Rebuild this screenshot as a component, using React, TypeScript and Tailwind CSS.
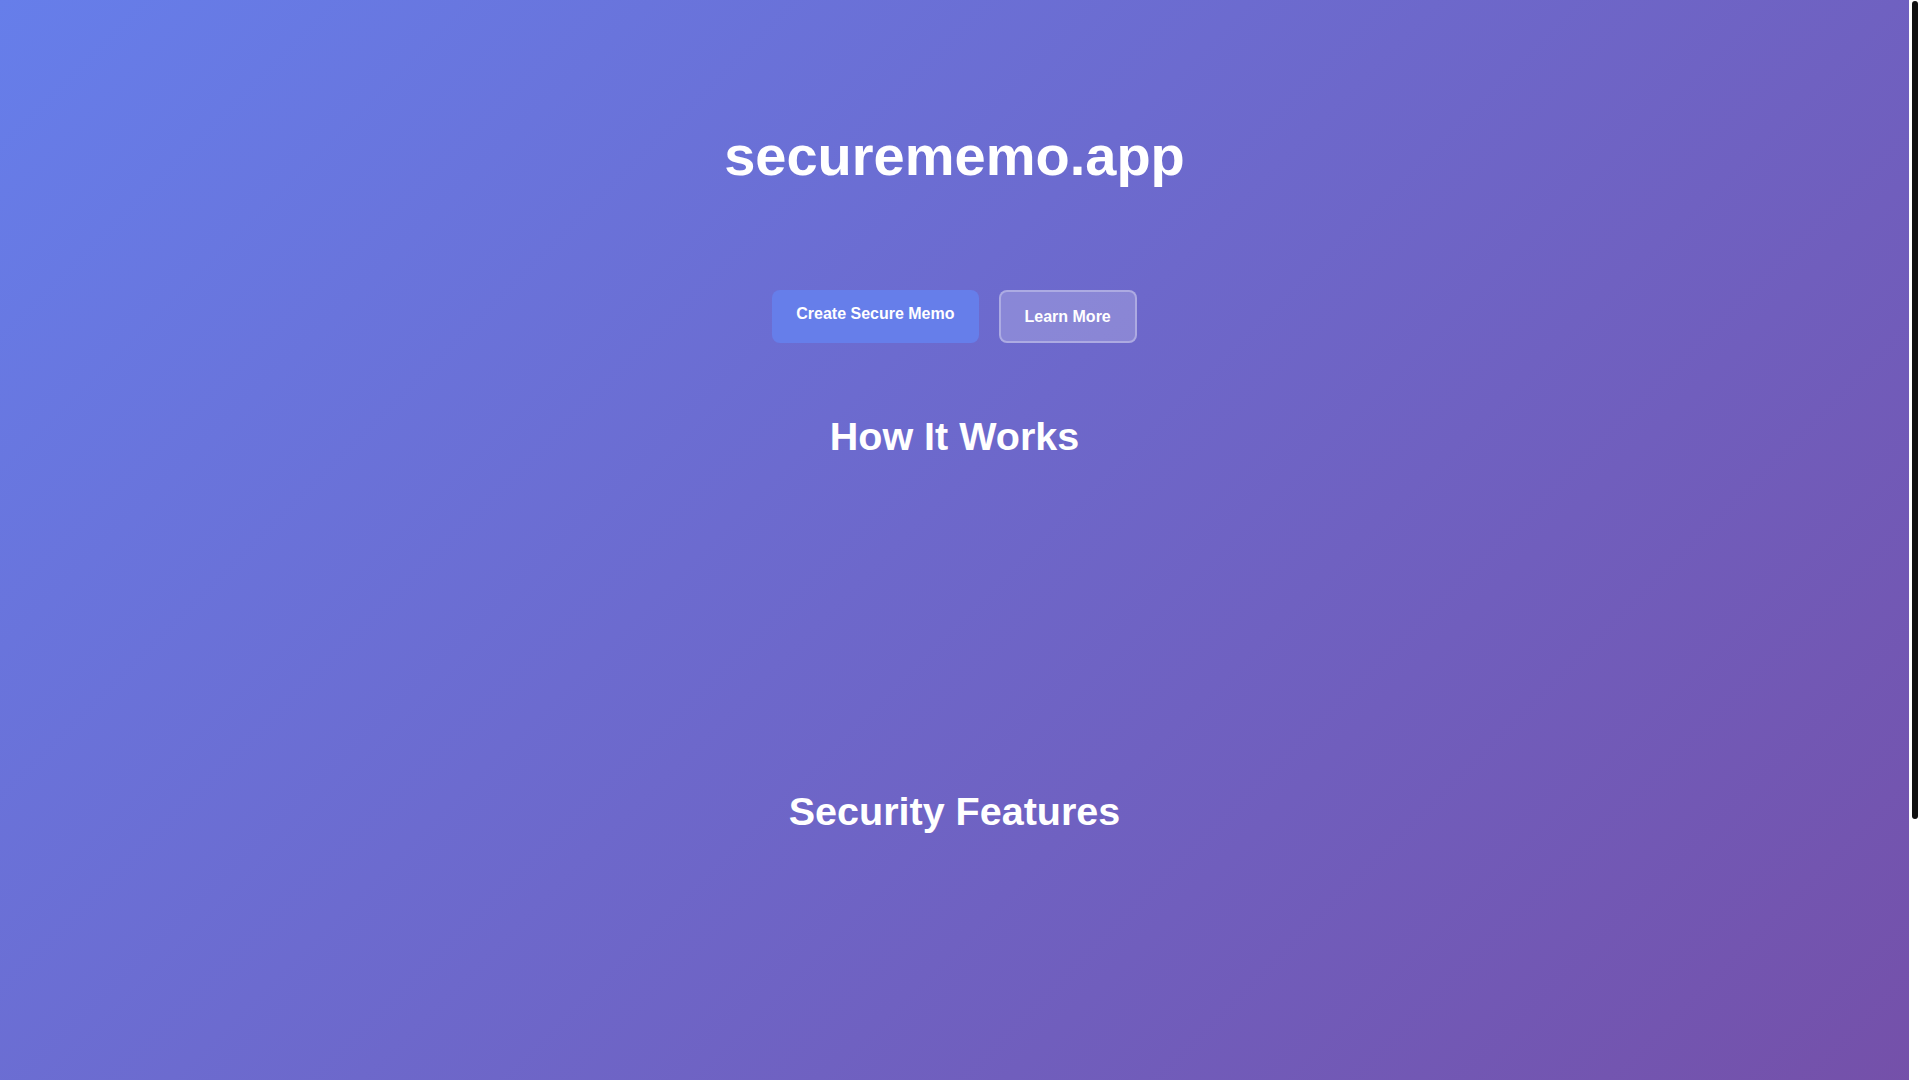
import React from "react";

const App: React.FC = () => {
  return (
    <div
      className="h-screen overflow-hidden flex"
      style={{ fontFamily: '"Liberation Sans", Arial, Helvetica, sans-serif' }}
    >
      {/* --- Page --- */}
      <div className="flex-1 h-[1424px] bg-[linear-gradient(135deg,#667eea_0%,#764ba2_100%)] text-white flex flex-col items-center pt-[122px]">
        {/* --- Hero --- */}
        <h1 className="text-[56px] leading-[1.2] font-bold">securememo.app</h1>

        <div className="mt-[101px] flex gap-[20px]">
          <button className="h-[53px] px-6 pb-[5px] flex items-center rounded-lg bg-[#667eea] text-white text-base font-bold">
            Create Secure Memo
          </button>
          <button className="h-[53px] px-6 flex items-center rounded-lg bg-white/20 border-2 border-white/30 text-white text-base font-bold">
            Learn More
          </button>
        </div>

        {/* --- How It Works --- */}
        <h2 className="mt-[70px] text-[39.5px] leading-[1.2] font-bold">How It Works</h2>
        <div className="h-[327px]" />

        {/* --- Security Features --- */}
        <h2 className="text-[39.5px] leading-[1.2] font-bold">Security Features</h2>
      </div>

      {/* --- Scrollbar --- */}
      <div className="w-[11px] shrink-0 bg-white pl-[3px]">
        <div className="mt-[1px] w-[6px] h-[818px] rounded-full bg-[#111111]" />
      </div>
    </div>
  );
};

export default App;
